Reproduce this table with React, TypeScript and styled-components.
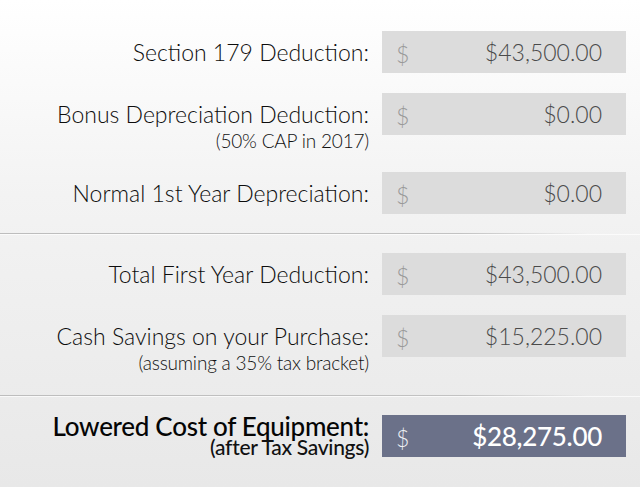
import React from "react";
import styled, { createGlobalStyle } from "styled-components";

const GlobalStyle = createGlobalStyle`
  html, body {
    margin: 0;
    padding: 0;
  }
  body {
    font-family: Lato, "Open Sans", sans-serif;
    background: #e9e9e9;
  }
`;

const Page = styled.div`
  width: 640px;
  height: 487px;
  box-sizing: border-box;
  padding-top: 31px;
  background: linear-gradient(to bottom, #ffffff 0%, #f3f3f3 40%, #e8e8e8 100%);
  display: flex;
  flex-direction: column;
  gap: 20px;
  overflow: hidden;
`;

const Row = styled.div`
  display: flex;
  align-items: flex-start;
  padding-right: 14px;
`;

const LabelBlock = styled.div`
  width: 369px;
  text-align: right;
  margin-right: 13px;
`;

const Label = styled.div<{ $strong?: boolean }>`
  font-size: ${p => (p.$strong ? "26px" : "23px")};
  font-weight: ${p => (p.$strong ? 500 : 300)};
  letter-spacing: ${p => (p.$strong ? "-0.3px" : "0")};
  color: ${p => (p.$strong ? "#050505" : "#0d0d0d")};
  line-height: ${p => (p.$strong ? "23px" : "42px")};
  white-space: nowrap;
`;

const SubLabel = styled.div<{ $strong?: boolean }>`
  font-size: ${p => (p.$strong ? "21px" : "19px")};
  font-weight: ${p => (p.$strong ? 500 : 300)};
  letter-spacing: ${p => (p.$strong ? "-0.3px" : "-0.2px")};
  color: #111;
  line-height: ${p => (p.$strong ? "18px" : "22px")};
  margin-top: ${p => (p.$strong ? "0" : "-5px")};
  white-space: nowrap;
`;

const Box = styled.div<{ $dark?: boolean }>`
  width: 244px;
  height: 42px;
  box-sizing: border-box;
  display: flex;
  align-items: center;
  justify-content: space-between;
  padding: 0 24px 0 14px;
  background: ${p => (p.$dark ? "#6b7189" : "#dcdcdc")};
`;

const Currency = styled.span<{ $dark?: boolean }>`
  font-size: 23px;
  font-weight: 300;
  color: ${p => (p.$dark ? "#eef0f4" : "#999999")};
  padding-top: 3px;
`;

const Amount = styled.span<{ $dark?: boolean }>`
  font-size: ${p => (p.$dark ? "26px" : "23px")};
  font-weight: ${p => (p.$dark ? 500 : 300)};
  color: ${p => (p.$dark ? "#ffffff" : "#4a4a4a")};
  letter-spacing: ${p => (p.$dark ? "-0.3px" : "0")};
`;

const Divider = styled.div<{ $shift: number }>`
  height: 1px;
  margin-top: ${p => p.$shift}px;
  margin-bottom: -1px;
  background: linear-gradient(to right, #bdbdbd 0%, #c2c2c2 72%, rgba(200, 200, 200, 0) 92%);
  box-shadow: 0 1px 0 rgba(255, 255, 255, 0.7);
`;

type Line = {
  label: string;
  note?: string;
  amount: string;
  strong?: boolean;
};

const groups: Line[][] = [
  [
    { label: "Section 179 Deduction:", amount: "$43,500.00" },
    { label: "Bonus Depreciation Deduction:", note: "(50% CAP in 2017)", amount: "$0.00" },
    { label: "Normal 1st Year Depreciation:", amount: "$0.00" },
  ],
  [
    { label: "Total First Year Deduction:", amount: "$43,500.00" },
    { label: "Cash Savings on your Purchase:", note: "(assuming a 35% tax bracket)", amount: "$15,225.00" },
  ],
  [
    { label: "Lowered Cost of Equipment:", note: "(after Tax Savings)", amount: "$28,275.00", strong: true },
  ],
];

const ResultRow = ({ line }: { line: Line }) => (
  <Row>
    <LabelBlock>
      <Label $strong={line.strong}>{line.label}</Label>
      {line.note && <SubLabel $strong={line.strong}>{line.note}</SubLabel>}
    </LabelBlock>
    <Box $dark={line.strong}>
      <Currency $dark={line.strong}>$</Currency>
      <Amount $dark={line.strong}>{line.amount}</Amount>
    </Box>
  </Row>
);

const App = () => (
  <>
    <GlobalStyle />
    <Page>
      {groups.map((group, gi) => (
        <React.Fragment key={gi}>
          {gi > 0 && <Divider $shift={gi === 1 ? -1 : 1} />}
          {group.map(line => (
            <ResultRow key={line.label} line={line} />
          ))}
        </React.Fragment>
      ))}
    </Page>
  </>
);

export default App;
